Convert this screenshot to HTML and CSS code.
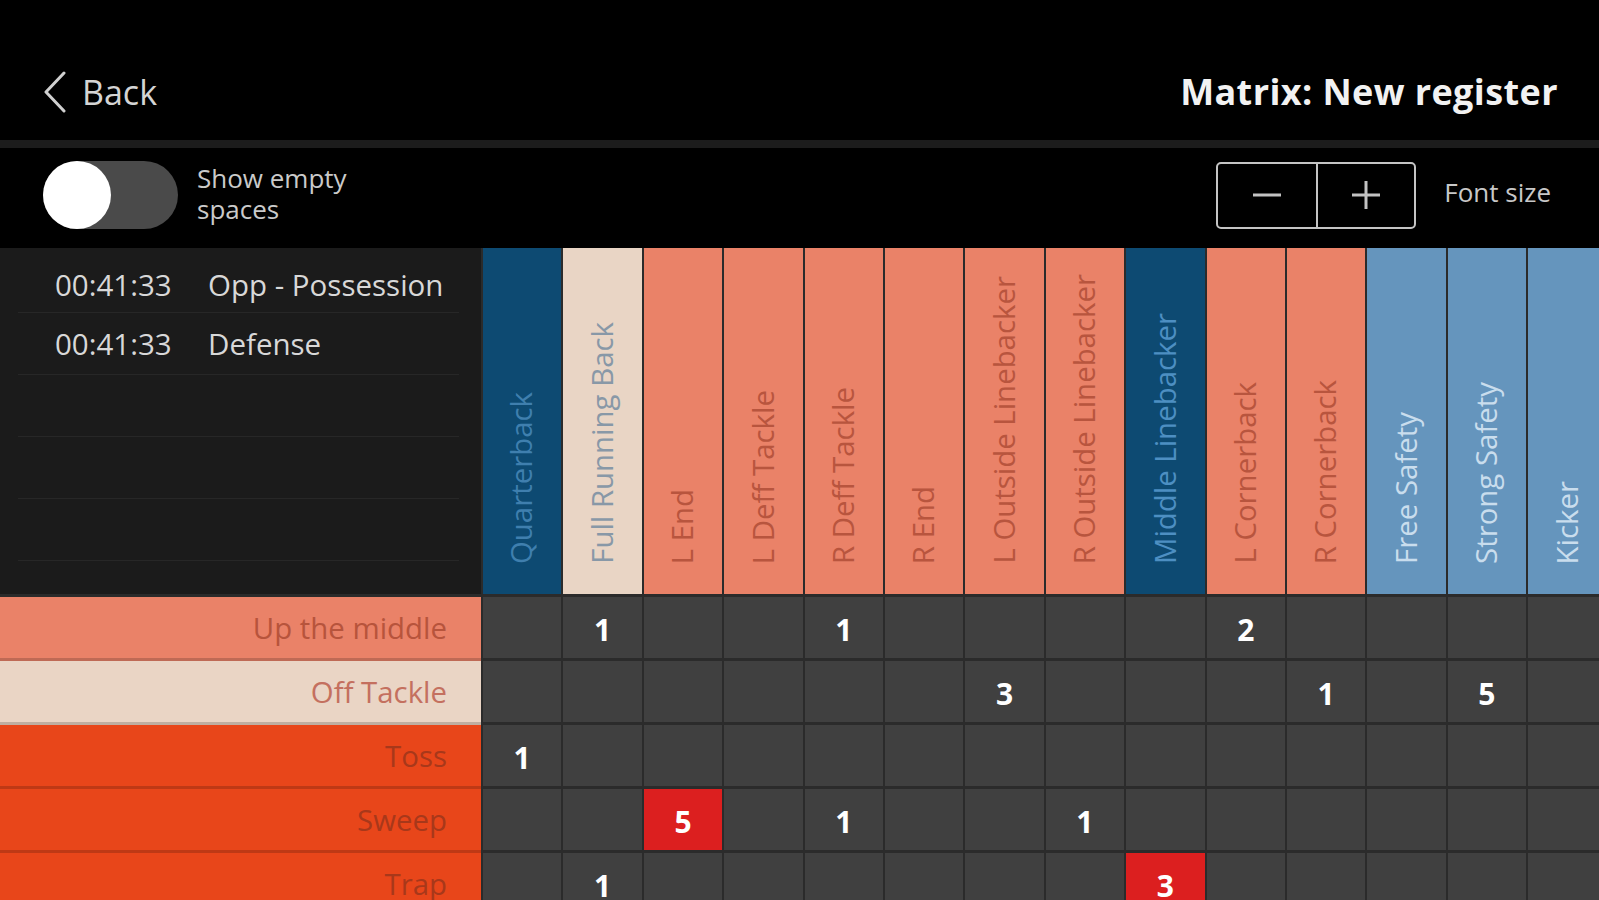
FILE: index.html
```html
<!DOCTYPE html>
<html lang="en">
<head>
<meta charset="utf-8">
<title>Matrix: New register</title>
<link rel="stylesheet" href="styles.css">
</head>
<body>
<div class="app">
  <header class="topbar">
    <a class="back" href="#">
      <svg class="chevron" viewBox="0 0 24 42" width="24" height="42"><path d="M21 2 L3 21 L21 40"/></svg>
      <span>Back</span>
    </a>
    <h1 class="title">Matrix: New register</h1>
  </header>
  <div class="divider"></div>
  <div class="toolbar">
    <div class="toggle-group">
      <span class="toggle"><span class="knob"></span></span>
      <span class="toggle-label"><span class="tl-line">Show empty</span><span class="tl-line">spaces</span></span>
    </div>
    <div class="font-controls">
      <div class="stepper">
        <button class="step"><svg viewBox="0 0 32 32" width="32" height="32"><path d="M2 16 H30"/></svg></button>
        <button class="step"><svg viewBox="0 0 32 32" width="32" height="32"><path d="M2 16 H30 M16 2 V30"/></svg></button>
      </div>
      <span class="font-label">Font size</span>
    </div>
  </div>

  <div class="matrix">
    <div class="log">
      <div class="log-row"><span class="time">00:41:33</span><span class="event">Opp - Possession</span></div>
      <div class="log-row"><span class="time">00:41:33</span><span class="event">Defense</span></div>
      <div class="log-row"></div>
      <div class="log-row"></div>
      <div class="log-row"></div>
    </div>
    <div class="hcell navy"><span>Quarterback</span></div>
    <div class="hcell beige"><span>Full Running Back</span></div>
    <div class="hcell salmon"><span>L End</span></div>
    <div class="hcell salmon"><span>L Deff Tackle</span></div>
    <div class="hcell salmon"><span>R Deff Tackle</span></div>
    <div class="hcell salmon"><span>R End</span></div>
    <div class="hcell salmon"><span>L Outside Linebacker</span></div>
    <div class="hcell salmon"><span>R Outside Linebacker</span></div>
    <div class="hcell navy mid"><span>Middle Linebacker</span></div>
    <div class="hcell salmon"><span>L Cornerback</span></div>
    <div class="hcell salmon"><span>R Cornerback</span></div>
    <div class="hcell sky"><span>Free Safety</span></div>
    <div class="hcell sky"><span>Strong Safety</span></div>
    <div class="hcell sky"><span>Kicker</span></div>

    <div class="rlabel r-salmon">Up the middle</div>
    <div class="cell"></div><div class="cell">1</div><div class="cell"></div><div class="cell"></div><div class="cell">1</div><div class="cell"></div><div class="cell"></div><div class="cell"></div><div class="cell"></div><div class="cell">2</div><div class="cell"></div><div class="cell"></div><div class="cell"></div><div class="cell"></div>

    <div class="rlabel r-beige">Off Tackle</div>
    <div class="cell"></div><div class="cell"></div><div class="cell"></div><div class="cell"></div><div class="cell"></div><div class="cell"></div><div class="cell">3</div><div class="cell"></div><div class="cell"></div><div class="cell"></div><div class="cell">1</div><div class="cell"></div><div class="cell">5</div><div class="cell"></div>

    <div class="rlabel r-orange">Toss</div>
    <div class="cell">1</div><div class="cell"></div><div class="cell"></div><div class="cell"></div><div class="cell"></div><div class="cell"></div><div class="cell"></div><div class="cell"></div><div class="cell"></div><div class="cell"></div><div class="cell"></div><div class="cell"></div><div class="cell"></div><div class="cell"></div>

    <div class="rlabel r-orange">Sweep</div>
    <div class="cell"></div><div class="cell"></div><div class="cell hot">5</div><div class="cell"></div><div class="cell">1</div><div class="cell"></div><div class="cell"></div><div class="cell">1</div><div class="cell"></div><div class="cell"></div><div class="cell"></div><div class="cell"></div><div class="cell"></div><div class="cell"></div>

    <div class="rlabel r-orange">Trap</div>
    <div class="cell"></div><div class="cell">1</div><div class="cell"></div><div class="cell"></div><div class="cell"></div><div class="cell"></div><div class="cell"></div><div class="cell"></div><div class="cell hot">3</div><div class="cell"></div><div class="cell"></div><div class="cell"></div><div class="cell"></div><div class="cell"></div>
  </div>
</div>
</body>
</html>
```

FILE: styles.css
```css
* { box-sizing: border-box; }

html, body {
  margin: 0;
  padding: 0;
  background: #000;
  width: 1599px;
  height: 900px;
  overflow: hidden;
  font-family: "Open Sans", "Noto Sans", "Liberation Sans", sans-serif;
  color: #d6d6d6;
}

.app {
  width: 1599px;
  height: 900px;
  overflow: hidden;
}

/* top bar */
.topbar {
  height: 140px;
  padding: 44px 41px 0 43px;
  display: flex;
  align-items: center;
  justify-content: space-between;
}

.back {
  display: flex;
  align-items: center;
  gap: 15px;
  color: #d4d4d4;
  text-decoration: none;
  font-size: 34px;
  line-height: 1;
}

.chevron path {
  fill: none;
  stroke: #d0d0d0;
  stroke-width: 3;
  stroke-linecap: round;
  stroke-linejoin: round;
}

.title {
  margin: 0;
  font-size: 36px;
  font-weight: 700;
  letter-spacing: 0.4px;
  color: #f2f2f2;
  line-height: 1;
}

.divider {
  height: 8px;
  background: #1c1c1c;
}

/* toolbar */
.toolbar {
  height: 100px;
  padding: 0 48px 6px 43px;
  display: flex;
  align-items: center;
  justify-content: space-between;
}

.toggle-group {
  display: flex;
  align-items: center;
  gap: 19px;
}

.toggle {
  width: 135px;
  height: 68px;
  border-radius: 34px;
  background: #4a4a4a;
  display: flex;
  align-items: center;
}

.knob {
  width: 68px;
  height: 68px;
  border-radius: 50%;
  background: #ffffff;
}

.toggle-label {
  display: flex;
  flex-direction: column;
  font-size: 26px;
  color: #cacaca;
  margin-top: -2px;
}

.tl-line {
  display: block;
  height: 31px;
  line-height: 31px;
  white-space: nowrap;
}

.font-controls {
  display: flex;
  align-items: center;
  gap: 28px;
}

.stepper {
  display: flex;
  border: 2px solid #c4c4c4;
  border-radius: 5px;
  height: 67px;
}

.step {
  width: 98px;
  height: 100%;
  background: transparent;
  border: 0;
  padding: 0;
  display: flex;
  align-items: center;
  justify-content: center;
}

.step + .step {
  border-left: 2px solid #c4c4c4;
}

.step svg path {
  stroke: #c2c2c2;
  stroke-width: 3;
  fill: none;
}

.font-label {
  font-size: 26px;
  color: #c8c8c8;
  margin-top: -6px;
}

/* matrix */
.matrix {
  display: grid;
  grid-template-columns: 481px repeat(14, 78.4px);
  grid-template-rows: 346px repeat(5, 61px);
  column-gap: 2px;
  row-gap: 3px;
  background: #2b2b2b;
  width: max-content;
}

.log {
  background: #1b1b1b;
  padding: 2px 22px 0 18px;
}

.log-row {
  height: 62px;
  border-bottom: 1px solid #272727;
  display: grid;
  grid-template-columns: 153px auto;
  align-items: center;
  padding-left: 37px;
  font-size: 29.5px;
  color: #d8d8d8;
  white-space: nowrap;
}

.log-row:first-child { padding-top: 6px; height: 63px; }

.hcell {
  display: flex;
  justify-content: center;
  align-items: flex-end;
  padding-bottom: 30px;
  overflow: hidden;
}

.hcell span {
  writing-mode: vertical-rl;
  transform: rotate(180deg);
  font-size: 29.4px;
  line-height: 1;
  white-space: nowrap;
}

.navy { background: #0d4a72; color: #3f7fae; }
.navy.mid { color: #4d8fc2; }
.beige { background: #e9d5c5; color: #8898a7; }
.salmon { background: #ea8268; color: #b8553e; }
.sky { background: #6595bd; color: #c9dded; }

.rlabel {
  display: flex;
  align-items: center;
  justify-content: flex-end;
  padding-right: 34px;
  font-size: 29.4px;
  line-height: 1;
  border-bottom: 3px solid rgba(0, 0, 0, 0.18);
  margin-bottom: -3px;
  padding-top: 2px;
}

.r-salmon { background: #ea8268; color: #b7543c; }
.r-beige { background: #ead5c5; color: #c4705f; }
.r-orange { background: #e8461a; color: #a8381a; }

.cell {
  background: #404040;
  color: #ffffff;
  font-weight: 700;
  font-size: 30px;
  display: flex;
  align-items: center;
  justify-content: center;
  padding-top: 4px;
}

.cell.hot {
  background: #dc1f1f;
}
```
